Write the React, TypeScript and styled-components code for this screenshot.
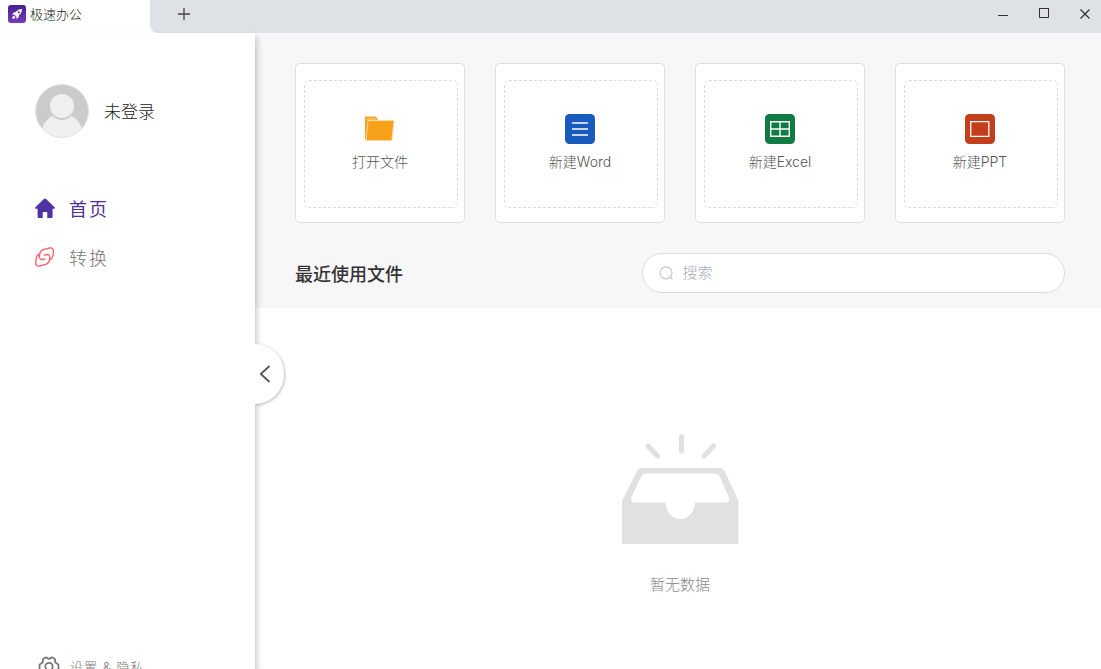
import React from 'react';
import styled, { createGlobalStyle } from 'styled-components';

const GlobalStyle = createGlobalStyle`
  *, *::before, *::after { box-sizing: border-box; }
  body {
    margin: 0;
    overflow: hidden;
    background: #fff;
  }
  button, input { font: inherit; }
  button { border: 0; padding: 0; background: none; cursor: pointer; }
  svg { display: block; flex: none; }
`;

const latinFirst = 'Inter, "Noto Sans CJK SC", sans-serif';

const Window = styled.div`
  display: flex;
  flex-direction: column;
  height: 100vh;
  overflow: hidden;
  font-family: "Noto Sans CJK SC", sans-serif;
  font-weight: 300;
`;

const TitleBar = styled.header`
  display: flex;
  flex: none;
  height: 33px;
`;

const AppTab = styled.div`
  display: flex;
  align-items: center;
  gap: 4px;
  width: 150px;
  padding: 0 0 6px 8px;
  color: #222;
  font-size: 13px;
  line-height: 20px;
`;

const TabStrip = styled.div`
  display: flex;
  flex: 1;
  justify-content: space-between;
  padding: 0 0 6px 20px;
  background: #dee1e6;
  border-bottom-left-radius: 8px;
`;

const StripButton = styled.button<{ $width: number }>`
  display: flex;
  align-items: center;
  justify-content: center;
  width: ${({ $width }) => $width}px;
`;

const WindowControls = styled.div`
  display: flex;
  margin-right: -4px;
`;

const Body = styled.div`
  display: flex;
  flex: 1;
  min-height: 0;
`;

const Sidebar = styled.aside`
  position: relative;
  z-index: 1;
  display: flex;
  flex-direction: column;
  flex: none;
  width: 255px;
  background: #fff;
  box-shadow: 2px 4px 6px rgba(0, 0, 0, 0.22);
`;

const Profile = styled.button`
  display: flex;
  align-items: center;
  gap: 15px;
  margin: 51px 0 0 35px;
  color: #222;
  font-size: 17px;
  line-height: 24px;
`;

const Nav = styled.nav`
  display: flex;
  flex-direction: column;
  gap: 17px;
  margin: 54px 0 0 35px;
`;

const NavLink = styled.a<{ $active?: boolean }>`
  display: flex;
  align-items: center;
  gap: 14px;
  height: 32px;
  color: ${({ $active }) => ($active ? '#4c2fa0' : '#777')};
  font-size: 18px;
  font-weight: ${({ $active }) => ($active ? 400 : 300)};
  letter-spacing: 2px;
  line-height: 26px;
  text-decoration: none;
`;

const SettingsLink = styled.a`
  display: flex;
  gap: 10px;
  height: 13px;
  margin: auto 0 0 38px;
  color: #777;
  font-family: ${latinFirst};
  font-size: 13px;
  letter-spacing: 1px;
  line-height: 22px;
  text-decoration: none;
`;

const CollapseButton = styled.button`
  position: absolute;
  top: 311px;
  left: 100%;
  display: flex;
  align-items: center;
  width: 29px;
  height: 60px;
  padding-left: 4px;
  background: #fff;
  border-radius: 0 30px 30px 0;
  box-shadow: 1px 1px 3px rgba(0, 0, 0, 0.25);
  clip-path: inset(-6px -6px -6px 0);
`;

const Main = styled.main`
  display: flex;
  flex-direction: column;
  flex: 1;
  min-width: 0;
`;

const Panel = styled.section`
  padding: 30px 36px 15px 40px;
  background: #f7f7f7;
`;

const CardGrid = styled.div`
  display: grid;
  grid-template-columns: repeat(4, 1fr);
  gap: 30px;
`;

const Card = styled.button`
  display: flex;
  height: 160px;
  padding: 16px 6px 14px 8px;
  background: #fff;
  border: 1px solid #dedede;
  border-radius: 5px;
`;

const CardInner = styled.span`
  display: flex;
  flex-direction: column;
  flex: 1;
  align-items: center;
  gap: 8px;
  height: 128px;
  padding: 33px 2px 0 0;
  border: 1px dashed #dcdcdc;
  border-radius: 5px;
  color: #555;
  font-family: ${latinFirst};
  font-size: 14px;
  line-height: 20px;
`;

const RecentBar = styled.div`
  display: flex;
  align-items: center;
  justify-content: space-between;
  margin-top: 30px;
`;

const RecentTitle = styled.h2`
  margin: 0;
  color: #333;
  font-size: 18px;
  font-weight: 500;
  line-height: 26px;
`;

const SearchBox = styled.label`
  display: flex;
  align-items: center;
  gap: 8px;
  width: 55%;
  height: 40px;
  padding: 0 16px;
  background: #fff;
  border: 1px solid #dcdcdc;
  border-radius: 20px;
`;

const SearchInput = styled.input`
  flex: 1;
  min-width: 0;
  padding: 0;
  color: #333;
  font-family: ${latinFirst};
  font-size: 15px;
  line-height: 22px;
  background: none;
  border: 0;
  outline: 0;
  &::placeholder { color: #a8acb8; opacity: 1; }
`;

const EmptyState = styled.section`
  display: flex;
  flex-direction: column;
  align-items: center;
  gap: 28px;
  padding: 125px 0 0 4px;
  color: #888;
  font-size: 15px;
  line-height: 22px;
`;

const EmptyText = styled.p`
  margin: 0;
`;

const AppLogo = () => (
  <svg width="18" height="18" viewBox="0 0 18 18">
    <defs>
      <linearGradient id="logo" x1="0" y1="0" x2="0" y2="1">
        <stop offset="0" stopColor="#43208f" />
        <stop offset="1" stopColor="#783bb8" />
      </linearGradient>
    </defs>
    <rect width="18" height="18" rx="3" fill="url(#logo)" />
    <path fill="#fff" fillRule="evenodd" d="M14 4c-2.600 0-4.700 1-6.100 2.900L5.800 7.400 4 9.400l2.200.2 2.200 2.200.2 2.200 2-1.800.4-2.100C12.900 8.700 14 6.600 14 4zM10.800 6.200a1.100 1.100 0 1 1 0 2.200a1.100 1.100 0 0 1 0-2.200zM5.800 10.500l1.700 1.700c-.5 1-1.600 1.500-3.300 1.600.1-1.700.6-2.800 1.600-3.300z" />
  </svg>
);

const PlusIcon = () => (
  <svg width="12" height="12" viewBox="0 0 12 12" stroke="#444" strokeWidth="1.3">
    <path d="M6 0v12M0 6h12" />
  </svg>
);

const MinimizeIcon = () => (
  <svg width="10" height="10" viewBox="0 0 10 10" fill="#333">
    <path d="M0 6h10v1H0z" />
  </svg>
);

const MaximizeIcon = () => (
  <svg width="10" height="12" viewBox="0 0 10 12" fill="none" stroke="#333">
    <rect x=".5" y=".5" width="9" height="9" />
  </svg>
);

const CloseIcon = () => (
  <svg width="10" height="10" viewBox="0 0 10 10" stroke="#333" strokeWidth="1.3">
    <path d="M.5 .5l9 9M9.5 .5l-9 9" />
  </svg>
);

const Avatar = () => (
  <svg width="54" height="54" viewBox="0 0 54 54">
    <defs>
      <clipPath id="avatar"><circle cx="27" cy="27" r="26.5" /></clipPath>
    </defs>
    <g clipPath="url(#avatar)">
      <rect width="54" height="54" fill="#cbcbcb" />
      <circle cx="27" cy="50" r="20.5" fill="#efefef" />
      <ellipse cx="27" cy="22" rx="13" ry="14" fill="#cbcbcb" />
      <circle cx="27" cy="22" r="12" fill="#efefef" />
    </g>
    <circle cx="27" cy="27" r="26.5" fill="none" stroke="#e3e3e3" />
  </svg>
);

const HomeIcon = () => (
  <svg width="20" height="20" viewBox="0 0 20 20" fill="#4f32a3">
    <path d="M8.900 .9a1.700 1.700 0 0 1 2.200 0l8.500 8.300c.7.7.4 1.500-.6 1.500H17.600V18.800a1.200 1.200 0 0 1-1.200 1.200H12.300V14.600a.7.7 0 0 0-.7-.7H8.400a.7.7 0 0 0-.7.7V20H3.800a1.200 1.200 0 0 1-1.200-1.200V10.700H1C0 10.700-.3 9.900.4 9.200z" />
  </svg>
);

const ConvertIcon = () => (
  <svg width="20" height="20" viewBox="0 0 20 20" fill="none" stroke="#f9646b" strokeWidth="1.4" strokeLinecap="round" strokeLinejoin="round">
    <path d="M14.600 13Q17.400 12 17.900 9L18.500 4.500Q18.500 .4 14.600 1L8.400 2.600Q5.200 3.600 4.800 6.600L4.400 9Q4.200 13 7.800 12.500L10 11.900" />
    <path d="M4.600 7Q1.800 8 1.300 11L.7 15.500Q.7 19.600 4.600 19L10.800 17.400Q14 16.400 14.400 13.400L14.800 11Q15 7 11.400 7.500L9.200 8.100" />
  </svg>
);

const GearIcon = () => (
  <svg width="22" height="22" viewBox="0 0 22 22" fill="none" stroke="#777" strokeWidth="1.8" strokeLinejoin="round">
    <path d="M7.500 1.500Q8.500 1.200 9.200 2Q11 3.600 12.800 2Q13.500 1.200 14.500 1.500L16.500 2.700Q17.300 3.300 17 4.300Q16.700 6.800 19 7.700Q20.500 8 20.500 9.500V12.500Q20.500 14 19 14.300Q16.700 15.200 17 17.700Q17.300 18.700 16.500 19.300L14.500 20.500Q13.500 20.800 12.800 20Q11 18.400 9.200 20Q8.500 20.800 7.500 20.500L5.500 19.300Q4.700 18.700 5 17.700Q5.300 15.200 3 14.300Q1.500 14 1.500 12.500V9.500Q1.500 8 3 7.700Q5.300 6.800 5 4.300Q4.700 3.300 5.500 2.700Z" />
    <circle cx="11" cy="10.500" r="3.7" />
  </svg>
);

const ChevronIcon = () => (
  <svg width="12" height="18" viewBox="0 0 12 18" fill="none" stroke="#555" strokeWidth="1.8">
    <path d="M10.500 1L1.800 9l8.700 8" />
  </svg>
);

const FolderIcon = () => (
  <svg width="30" height="30" viewBox="0 0 30 30">
    <path d="M0 3.500Q0 2.500 1 2.500H10Q11 2.500 11.500 3.500L13 6V10L3 26H1Q0 26 0 25z" fill="#f7a11b" />
    <path d="M1.500 3.800H10L11.500 6H1.500z" fill="#f9bc5c" />
    <path d="M3 6.500H29L26.800 26.500H1z" fill="#f7a11b" stroke="#fbd9a1" />
  </svg>
);

const WordIcon = () => (
  <svg width="30" height="30" viewBox="0 0 30 30">
    <rect width="30" height="30" rx="4.500" fill="#185abd" />
    <path d="M7 9h16M7 15h16M7 21h16" stroke="#fff" strokeWidth="1.6" />
  </svg>
);

const ExcelIcon = () => (
  <svg width="30" height="30" viewBox="0 0 30 30">
    <rect width="30" height="30" rx="4.500" fill="#107c41" />
    <path d="M5.700 7.700h18.600v14.600H5.700zM15 7.700v14.600M5.700 15h18.600" fill="none" stroke="#fff" strokeWidth="1.4" />
  </svg>
);

const SlidesIcon = () => (
  <svg width="30" height="30" viewBox="0 0 30 30">
    <rect width="30" height="30" rx="4.500" fill="#c43e1c" />
    <path d="M5.700 7.700h18.100v14.600H5.700z" fill="none" stroke="#fff" strokeWidth="1.3" />
  </svg>
);

const SearchIcon = () => (
  <svg width="16" height="16" viewBox="0 0 16 16" fill="none" stroke="#c4c7ce" strokeWidth="1.2">
    <circle cx="7" cy="7.800" r="6" />
    <path d="M11.300 12l2 2" />
  </svg>
);

const EmptyTray = () => (
  <svg width="118" height="112" viewBox="0 0 118 112">
    <path d="M27 13l9.500 10M60.500 3.500v14.500M92.500 13l-9.500 10" stroke="#e1e1e1" strokeWidth="5.2" strokeLinecap="round" />
    <path fill="#e1e1e1" fillRule="evenodd" d="M20.500 35h78q3.500 0 5 3L117.500 68V111H1V68L16 38Q17.500 35 20.500 35zM25 40.500Q22 40.500 20.500 43L10.700 63.500Q8.500 69 14 69.500H44.500A14.500 16.300 0 0 0 74 69.500H105Q110 69 107.500 63.500L98.500 43Q97 40.500 94 40.500z" />
  </svg>
);

const actions = [
  { label: '打开文件', Icon: FolderIcon },
  { label: '新建Word', Icon: WordIcon },
  { label: '新建Excel', Icon: ExcelIcon },
  { label: '新建PPT', Icon: SlidesIcon },
];

export default function App() {
  return (
    <Window>
      <GlobalStyle />
      <TitleBar>
        <AppTab>
          <AppLogo />
          极速办公
        </AppTab>
        <TabStrip>
          <StripButton $width={28} aria-label="新标签页"><PlusIcon /></StripButton>
          <WindowControls>
            <StripButton $width={41} aria-label="最小化"><MinimizeIcon /></StripButton>
            <StripButton $width={41} aria-label="最大化"><MaximizeIcon /></StripButton>
            <StripButton $width={41} aria-label="关闭"><CloseIcon /></StripButton>
          </WindowControls>
        </TabStrip>
      </TitleBar>
      <Body>
        <Sidebar>
          <Profile>
            <Avatar />
            未登录
          </Profile>
          <Nav>
            <NavLink href="#home" $active><HomeIcon />首页</NavLink>
            <NavLink href="#convert"><ConvertIcon />转换</NavLink>
          </Nav>
          <SettingsLink href="#settings"><GearIcon />设置 &amp; 隐私</SettingsLink>
          <CollapseButton aria-label="收起侧栏"><ChevronIcon /></CollapseButton>
        </Sidebar>
        <Main>
          <Panel>
            <CardGrid>
              {actions.map(({ label, Icon }) => (
                <Card key={label}>
                  <CardInner>
                    <Icon />
                    {label}
                  </CardInner>
                </Card>
              ))}
            </CardGrid>
            <RecentBar>
              <RecentTitle>最近使用文件</RecentTitle>
              <SearchBox>
                <SearchIcon />
                <SearchInput type="text" placeholder="搜索" aria-label="搜索" />
              </SearchBox>
            </RecentBar>
          </Panel>
          <EmptyState>
            <EmptyTray />
            <EmptyText>暂无数据</EmptyText>
          </EmptyState>
        </Main>
      </Body>
    </Window>
  );
}
